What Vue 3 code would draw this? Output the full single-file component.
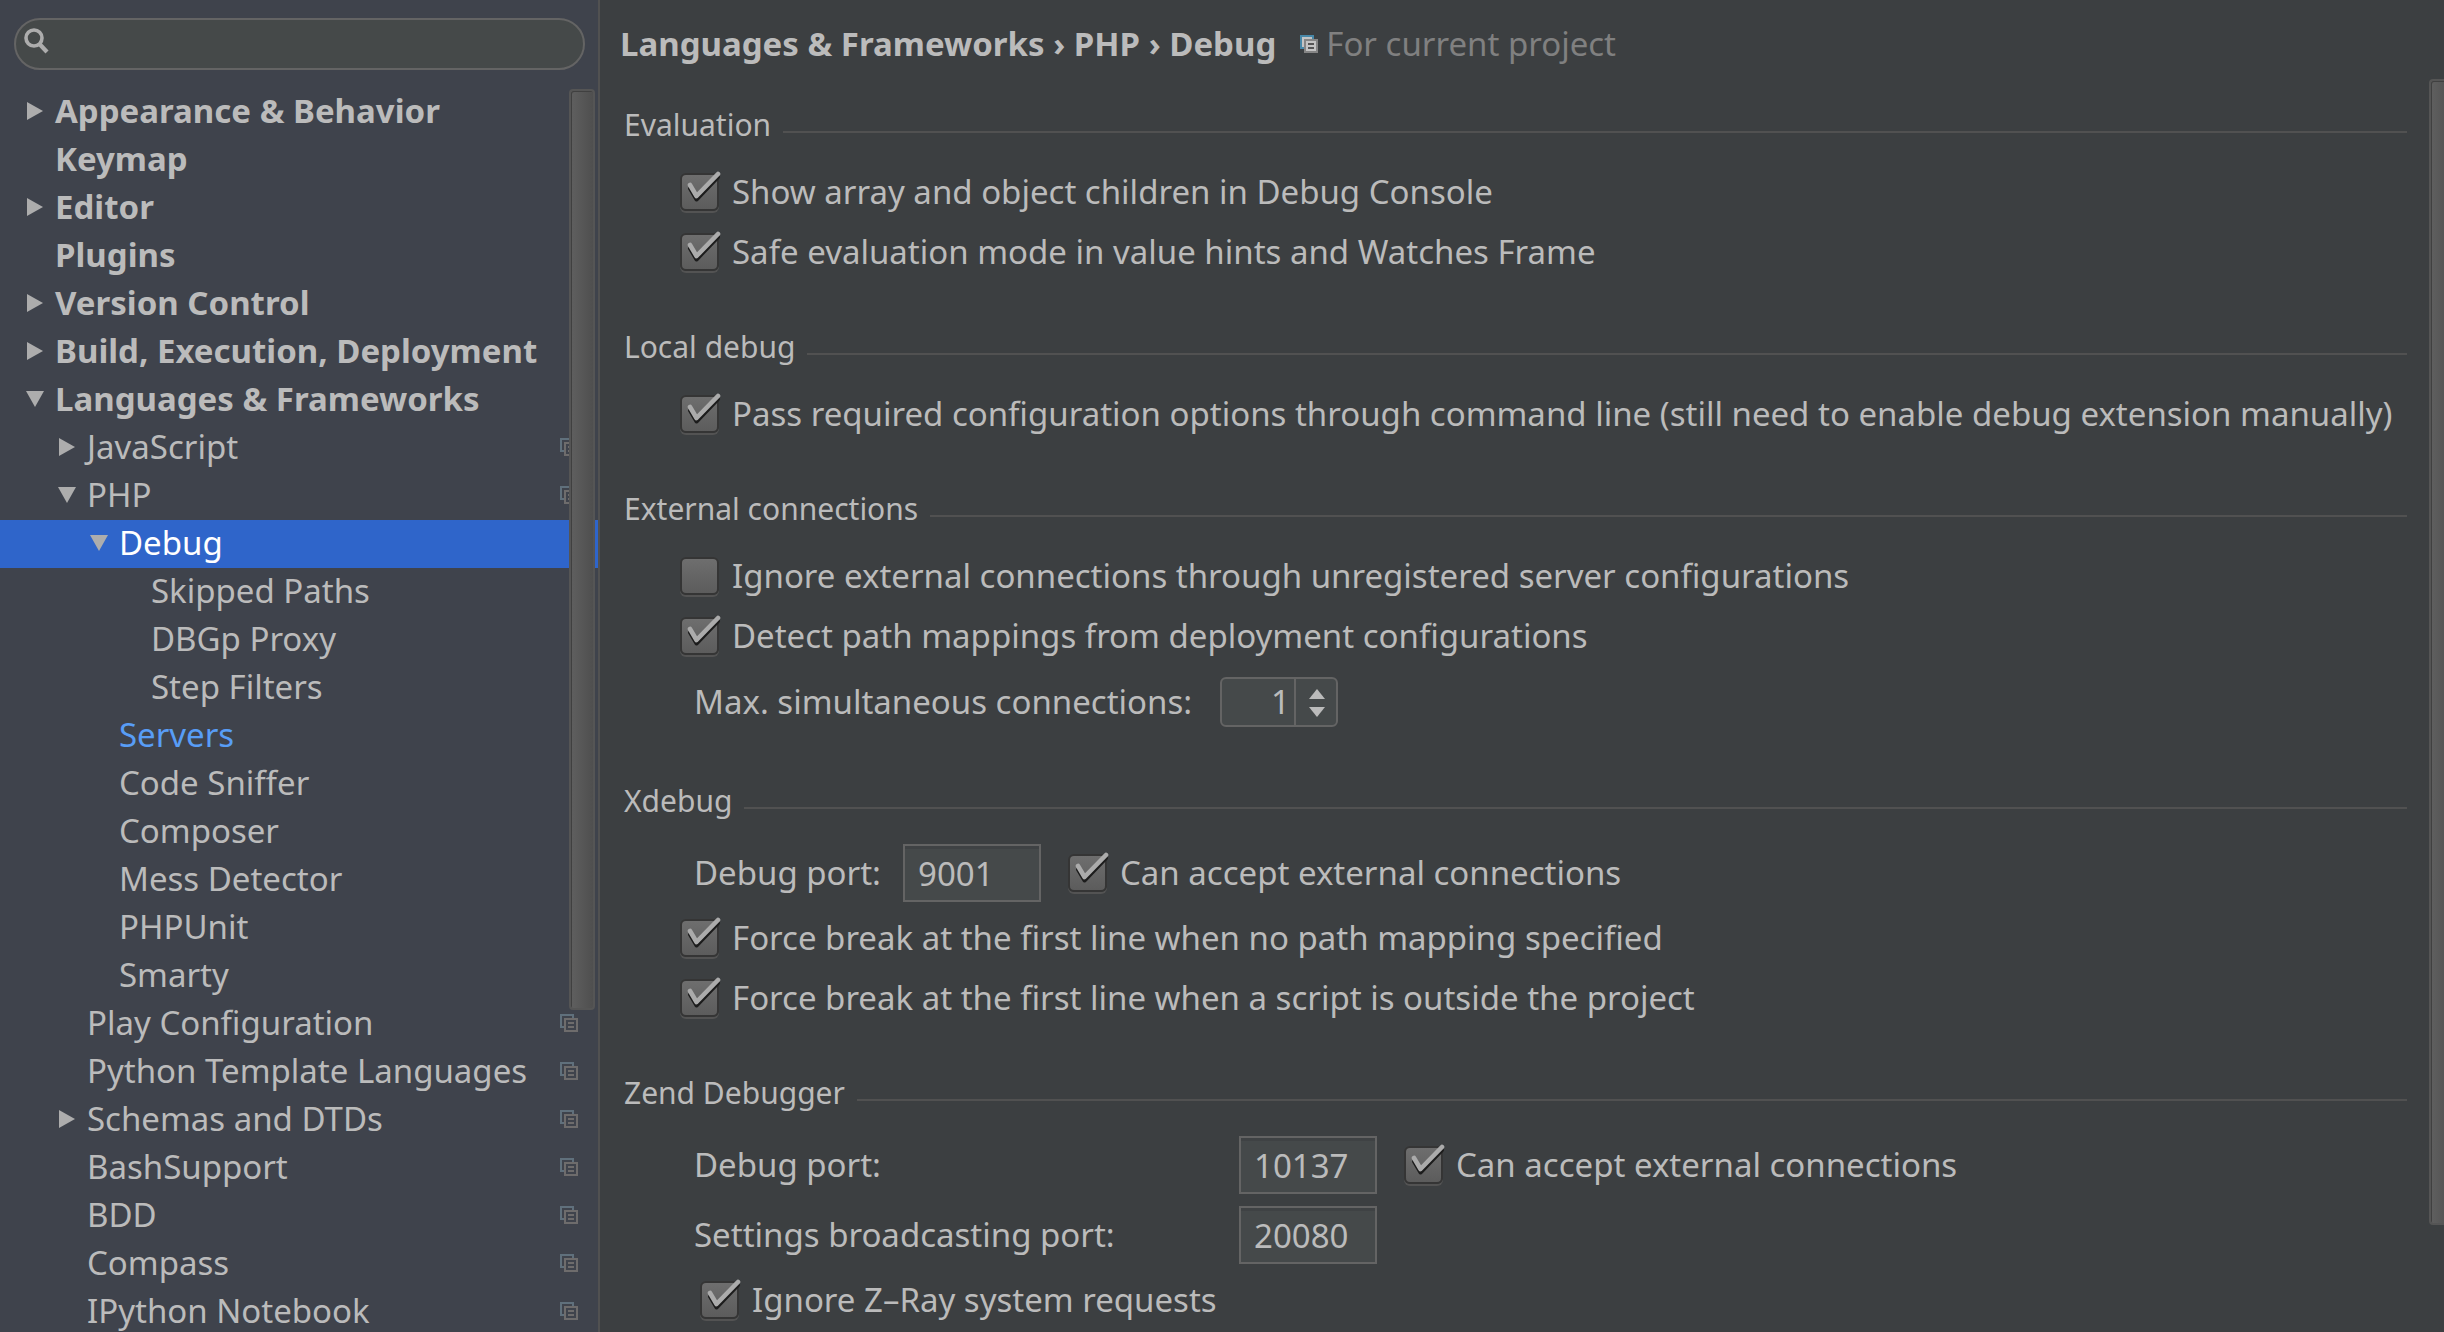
<script setup>
import { ref, reactive, h } from 'vue'

const tree = [
  { label: 'Appearance & Behavior', level: 0, state: 'closed' },
  { label: 'Keymap', level: 0 },
  { label: 'Editor', level: 0, state: 'closed' },
  { label: 'Plugins', level: 0 },
  { label: 'Version Control', level: 0, state: 'closed' },
  { label: 'Build, Execution, Deployment', level: 0, state: 'closed' },
  { label: 'Languages & Frameworks', level: 0, state: 'open' },
  { label: 'JavaScript', level: 1, state: 'closed', project: true },
  { label: 'PHP', level: 1, state: 'open', project: true },
  { label: 'Debug', level: 2, state: 'open', selected: true },
  { label: 'Skipped Paths', level: 3 },
  { label: 'DBGp Proxy', level: 3 },
  { label: 'Step Filters', level: 3 },
  { label: 'Servers', level: 2, modified: true },
  { label: 'Code Sniffer', level: 2 },
  { label: 'Composer', level: 2 },
  { label: 'Mess Detector', level: 2 },
  { label: 'PHPUnit', level: 2 },
  { label: 'Smarty', level: 2 },
  { label: 'Play Configuration', level: 1, project: true },
  { label: 'Python Template Languages', level: 1, project: true },
  { label: 'Schemas and DTDs', level: 1, state: 'closed', project: true },
  { label: 'BashSupport', level: 1, project: true },
  { label: 'BDD', level: 1, project: true },
  { label: 'Compass', level: 1, project: true },
  { label: 'IPython Notebook', level: 1, project: true }
]

const search = ref('')
const settings = reactive({
  showChildren: true,
  safeEvaluation: true,
  passOptions: true,
  ignoreUnregistered: false,
  detectMappings: true,
  maxConnections: 1,
  xdebugPort: '9001',
  xdebugExternal: true,
  breakNoMapping: true,
  breakOutside: true,
  zendPort: '10137',
  zendExternal: true,
  broadcastPort: '20080',
  ignoreZRay: true
})

const CheckMark = () =>
  h('svg', { viewBox: '0 0 44 44', 'aria-hidden': 'true' }, [
    h('path', { d: 'M10 17.5 L16.5 28.5 L38 6', fill: 'none', stroke: '#1c1c1c', 'stroke-width': 4, 'stroke-linecap': 'round', 'stroke-linejoin': 'round' }),
    h('path', { d: 'M10 14 L16.5 25 L38 3', fill: 'none', stroke: '#ababab', 'stroke-width': 4.6, 'stroke-linecap': 'round', 'stroke-linejoin': 'round' })
  ])
</script>

<template>
  <div class="settings">
    <aside class="sidebar">
      <div class="search">
        <svg class="search-icon" viewBox="0 0 26 26" aria-hidden="true">
          <circle cx="10" cy="10" r="8" fill="none" stroke="#adadad" stroke-width="3.6" />
          <path d="M15.5 16 L23 24" stroke="#adadad" stroke-width="4.2" />
        </svg>
        <input v-model="search" type="search" aria-label="Search settings" />
      </div>
      <nav class="tree" aria-label="Settings">
        <a
          v-for="item in tree"
          :key="item.label"
          href="#"
          :class="['node', 'level-' + item.level, { selected: item.selected, modified: item.modified }]"
          @click.prevent
        >
          <svg v-if="item.state === 'closed'" class="arrow" viewBox="0 0 18 18" aria-hidden="true">
            <path d="M1 0 V18 L17 9 Z" fill="#adadad" />
          </svg>
          <svg v-else-if="item.state === 'open'" class="arrow" viewBox="0 0 18 18" aria-hidden="true">
            <path d="M0 1 H18 L9 17 Z" fill="#adadad" />
          </svg>
          <span v-else class="arrow"></span>
          <span class="node-label">{{ item.label }}</span>
          <svg v-if="item.project" class="project-icon" viewBox="0 0 18 18" fill="none" stroke-width="2" aria-hidden="true">
            <path d="M4 13 H1 V1 H13 V4" stroke="#60707c" />
            <path d="M5 5 H17 V17 H5 Z M8 9 H14 M8 13 H14" stroke="#6e6c6c" />
          </svg>
        </a>
        <div class="scroll-thumb tree-thumb"></div>
      </nav>
    </aside>

    <main class="content">
      <header class="crumbs">
        <h1>Languages &amp; Frameworks › PHP › Debug</h1>
        <svg viewBox="0 0 18 18" aria-hidden="true">
          <path d="M1 1 H13 V13 H1 Z" fill="#c4c4c4" stroke="#4888a8" stroke-width="2" />
          <path d="M5 5 H17 V17 H5 Z" fill="#c4c4c4" stroke="#858585" stroke-width="2" />
          <path d="M8 9 H14 M8 13 H14" stroke="#555555" stroke-width="2" />
        </svg>
        <span>For current project</span>
      </header>

      <section>
        <h2>Evaluation</h2>
        <label class="check"><span class="box"><input v-model="settings.showChildren" type="checkbox" /><CheckMark v-if="settings.showChildren" class="mark" /></span>Show array and object children in Debug Console</label>
        <label class="check"><span class="box"><input v-model="settings.safeEvaluation" type="checkbox" /><CheckMark v-if="settings.safeEvaluation" class="mark" /></span>Safe evaluation mode in value hints and Watches Frame</label>
      </section>

      <section>
        <h2>Local debug</h2>
        <label class="check"><span class="box"><input v-model="settings.passOptions" type="checkbox" /><CheckMark v-if="settings.passOptions" class="mark" /></span>Pass required configuration options through command line (still need to enable debug extension manually)</label>
      </section>

      <section>
        <h2>External connections</h2>
        <label class="check"><span class="box"><input v-model="settings.ignoreUnregistered" type="checkbox" /><CheckMark v-if="settings.ignoreUnregistered" class="mark" /></span>Ignore external connections through unregistered server configurations</label>
        <label class="check"><span class="box"><input v-model="settings.detectMappings" type="checkbox" /><CheckMark v-if="settings.detectMappings" class="mark" /></span>Detect path mappings from deployment configurations</label>
        <div class="field spinner-row">
          <label class="wide" for="max-connections">Max. simultaneous connections:</label>
          <div class="spinner">
            <input id="max-connections" v-model.number="settings.maxConnections" type="text" inputmode="numeric" />
            <div class="steps">
              <button type="button" aria-label="Increase" @click="settings.maxConnections++">
                <svg viewBox="0 0 16 10" aria-hidden="true"><path d="M0 10 L8 0 L16 10 Z" fill="#bbbbbb" /></svg>
              </button>
              <button type="button" aria-label="Decrease" @click="settings.maxConnections--">
                <svg viewBox="0 0 16 10" aria-hidden="true"><path d="M0 0 L8 10 L16 0 Z" fill="#bbbbbb" /></svg>
              </button>
            </div>
          </div>
        </div>
      </section>

      <section>
        <h2>Xdebug</h2>
        <div class="field">
          <label class="narrow" for="xdebug-port">Debug port:</label>
          <input id="xdebug-port" v-model="settings.xdebugPort" class="port" type="text" />
          <label class="check inline"><span class="box"><input v-model="settings.xdebugExternal" type="checkbox" /><CheckMark v-if="settings.xdebugExternal" class="mark" /></span>Can accept external connections</label>
        </div>
        <label class="check"><span class="box"><input v-model="settings.breakNoMapping" type="checkbox" /><CheckMark v-if="settings.breakNoMapping" class="mark" /></span>Force break at the first line when no path mapping specified</label>
        <label class="check"><span class="box"><input v-model="settings.breakOutside" type="checkbox" /><CheckMark v-if="settings.breakOutside" class="mark" /></span>Force break at the first line when a script is outside the project</label>
      </section>

      <section>
        <h2>Zend Debugger</h2>
        <div class="field">
          <label class="zend" for="zend-port">Debug port:</label>
          <input id="zend-port" v-model="settings.zendPort" class="port" type="text" />
          <label class="check inline"><span class="box"><input v-model="settings.zendExternal" type="checkbox" /><CheckMark v-if="settings.zendExternal" class="mark" /></span>Can accept external connections</label>
        </div>
        <div class="field">
          <label class="zend" for="broadcast-port">Settings broadcasting port:</label>
          <input id="broadcast-port" v-model="settings.broadcastPort" class="port" type="text" />
        </div>
        <label class="check nested"><span class="box"><input v-model="settings.ignoreZRay" type="checkbox" /><CheckMark v-if="settings.ignoreZRay" class="mark" /></span>Ignore Z–Ray system requests</label>
      </section>

      <div class="scroll-thumb content-thumb"></div>
    </main>
  </div>
</template>

<style>
body {
  background: #3c3f41;
}
</style>

<style scoped>
.settings {
  display: flex;
  height: 100vh;
  overflow: hidden;
  background: #3c3f41;
  color: #bbbbbb;
  font-family: "Noto Sans", "Open Sans", sans-serif;
  font-size: 33px;
  line-height: 48px;
  white-space: nowrap;
}

.settings * {
  box-sizing: border-box;
}

input,
button {
  margin: 0;
  font: inherit;
  color: inherit;
}

/* Sidebar */
.sidebar {
  display: flex;
  flex: 0 0 600px;
  flex-direction: column;
  border-right: 2px solid #515151;
  background: #3f434c;
}

.search {
  position: relative;
  flex: none;
  margin: 18px 13px 18px 14px;
}

.search input {
  display: block;
  width: 100%;
  height: 52px;
  padding: 0 20px 0 44px;
  border: 2px solid #646464;
  border-radius: 26px;
  outline: none;
  appearance: none;
  background: #454949;
}

.search-icon {
  position: absolute;
  top: 10px;
  left: 10px;
  width: 26px;
  height: 26px;
}

.tree {
  position: relative;
  flex: 1;
  min-height: 0;
  overflow: hidden;
}

.node {
  display: flex;
  align-items: center;
  height: 48px;
  padding-right: 20px;
  padding-bottom: 3px;
  color: inherit;
  line-height: 40px;
  text-decoration: none;
}

.arrow {
  flex: none;
  width: 18px;
  height: 18px;
  margin-right: 11px;
}

.node-label {
  flex: 1;
}

.project-icon {
  flex: none;
  width: 18px;
  height: 18px;
}

.level-0 {
  padding-left: 26px;
  font-weight: 700;
}

.level-1 {
  padding-left: 58px;
}

.level-2 {
  padding-left: 90px;
}

.level-3 {
  padding-left: 122px;
}

.selected {
  background: #2f65ca;
  color: #ffffff;
}

.modified {
  color: #589df6;
}

.scroll-thumb {
  position: absolute;
  border: 2px solid #555555;
  border-radius: 4px;
  background: linear-gradient(90deg, #5f5f5f, #4f4f4f);
  box-shadow: inset 1px 1px #404040;
}

.tree-thumb {
  top: 1px;
  right: 3px;
  width: 26px;
  height: 74%;
}

/* Content */
.content {
  position: relative;
  flex: 1;
  min-width: 0;
  padding: 20px 37px 0 24px;
}

.crumbs {
  display: flex;
  align-items: center;
  margin-left: -4px;
  margin-bottom: 37px;
}

.crumbs h1 {
  margin: 0;
  font-size: 33px;
  font-weight: 700;
}

.crumbs svg {
  width: 18px;
  height: 18px;
  margin: 0 8px 0 24px;
}

.crumbs span {
  color: #808080;
}

section {
  display: flow-root;
  margin-bottom: 45px;
}

h2 {
  display: flex;
  align-items: center;
  margin: 0 0 17px;
  font-size: 30px;
  font-weight: 400;
  line-height: 40px;
}

h2::after {
  content: "";
  flex: 1;
  height: 2px;
  margin-top: 14px;
  margin-left: 12px;
  background: #515151;
}

.check {
  display: flex;
  align-items: center;
  height: 60px;
  padding-left: 56px;
}

.check.inline {
  padding-left: 27px;
}

.check.nested {
  padding-left: 76px;
}

.box {
  position: relative;
  flex: none;
  width: 40px;
  height: 38px;
  margin-right: 12px;
}

.box input {
  display: block;
  width: 39px;
  height: 38px;
  border: 2px solid #353535;
  border-radius: 6px;
  appearance: none;
  background: linear-gradient(#6e6e6e, #5c5c5c);
  box-shadow: 0 2px #535353;
}

.mark {
  position: absolute;
  top: -2px;
  left: 0;
  width: 44px;
  height: 44px;
  pointer-events: none;
}

.field {
  display: flex;
  align-items: center;
  height: 70px;
  padding-left: 70px;
}

.narrow {
  width: 209px;
}

.wide {
  width: 526px;
}

.zend {
  width: 545px;
}

.port {
  width: 138px;
  height: 58px;
  padding: 0 13px;
  border: 2px solid #646464;
  border-radius: 0;
  outline: none;
  background: #45494a;
  box-shadow: inset 0 3px #3f4244;
}

.spinner-row {
  height: 50px;
  margin: 11px 0 9px;
}

.spinner {
  display: flex;
  width: 118px;
  height: 50px;
  border: 2px solid #646464;
  border-radius: 6px;
  background: #45494a;
}

.spinner input {
  flex: 1;
  min-width: 0;
  padding: 0 4px 0 0;
  border: 0;
  outline: none;
  background: none;
  text-align: right;
}

.steps {
  display: flex;
  flex-direction: column;
  justify-content: center;
  gap: 8px;
  width: 42px;
  padding: 2px 0 0 2px;
  border-left: 2px solid #646464;
}

.steps button {
  display: flex;
  justify-content: center;
  padding: 0;
  border: 0;
  background: none;
}

.steps svg {
  width: 16px;
  height: 10px;
}

.content-thumb {
  top: 79px;
  right: -11px;
  width: 26px;
  height: 86%;
}
</style>
